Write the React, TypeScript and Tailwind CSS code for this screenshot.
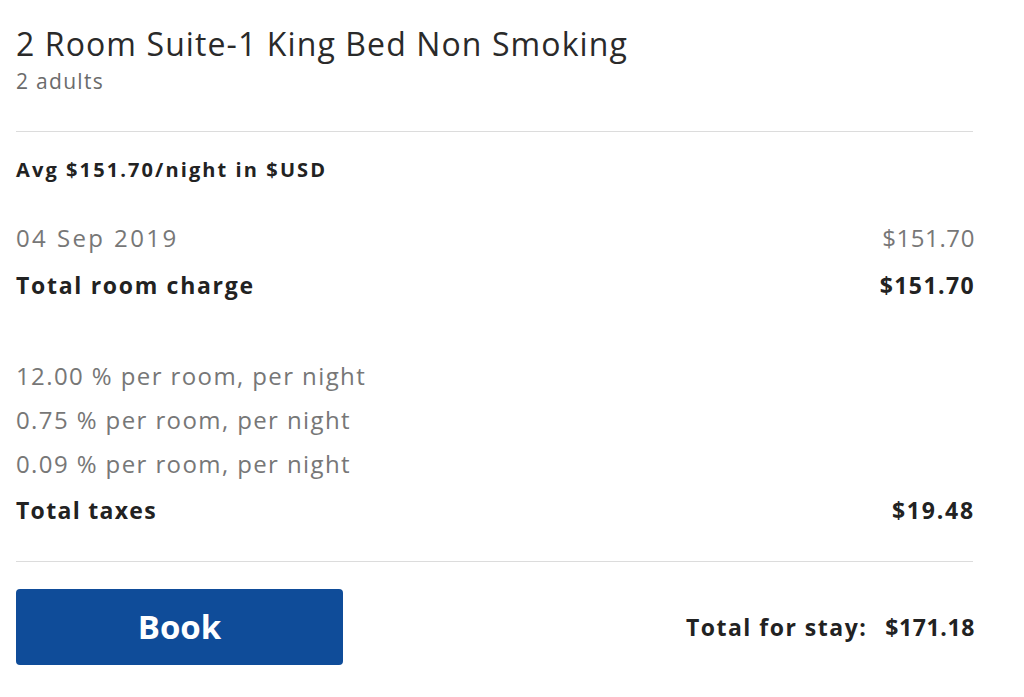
export default function App() {
  const taxes = [
    "12.00 % per room, per night",
    "0.75 % per room, per night",
    "0.09 % per room, per night",
  ];

  return (
    <div className="min-h-screen bg-white font-['Open_Sans',sans-serif] text-[#222]">
      <div className="w-[957px] ml-4 pt-[22px]">
        <h1 className="text-[32px] leading-[44px] tracking-[1.1px] text-[#2a2a2a]">
          2 Room Suite-1 King Bed Non Smoking
        </h1>
        <p className="mt-[2px] text-[21px] leading-[26px] tracking-[1.3px] text-[#6b6b6b]">2 adults</p>

        <div className="mt-[37px] border-t border-[#dcdcdc]" />

        <p className="mt-[24px] text-[20px] leading-[28px] font-bold tracking-[2.1px]">
          Avg $151.70/night in $USD
        </p>

        <div className="mt-[39px] flex items-center justify-between text-[24px] leading-[30px] text-[#777]">
          <span className="tracking-[2.4px]">04 Sep 2019</span>
          <span className="-mr-0.5 tracking-[0.6px]">$151.70</span>
        </div>
        <div className="mt-[17px] flex items-center justify-between text-[23px] leading-[30px] font-bold">
          <span className="tracking-[1.7px]">Total room charge</span>
          <span className="-mr-0.5 tracking-[1.4px]">$151.70</span>
        </div>

        <div className="mt-[61px] flex flex-col gap-[14px] text-[24px] leading-[30px] tracking-[1.4px] text-[#777]">
          {taxes.map((t) => (
            <span key={t}>{t}</span>
          ))}
        </div>
        <div className="mt-[16px] flex items-center justify-between text-[23px] leading-[30px] font-bold">
          <span className="tracking-[1.3px]">Total taxes</span>
          <span className="-mr-0.5 tracking-[1.8px]">$19.48</span>
        </div>

        <div className="mt-[36px] border-t border-[#dcdcdc]" />

        <div className="mt-[27px] flex items-center justify-between">
          <button className="h-[76px] w-[327px] rounded-[4px] bg-[#0f4c99] text-[33px] font-bold text-white">
            Book
          </button>
          <div className="-mr-0.5 flex gap-[18px] text-[23px] font-bold">
            <span className="tracking-[1.5px]">Total for stay:</span>
            <span className="tracking-[0.6px]">$171.18</span>
          </div>
        </div>
      </div>
    </div>
  );
}
